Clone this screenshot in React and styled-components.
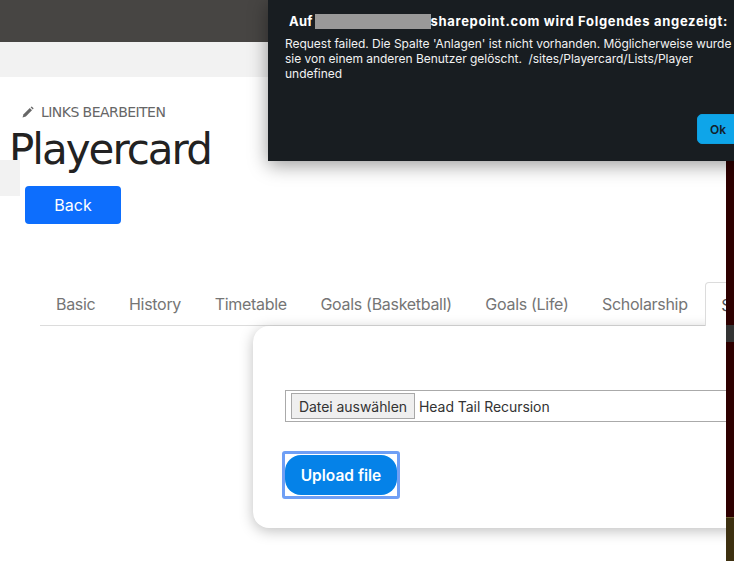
import React from "react";
import styled, { createGlobalStyle } from "styled-components";

const GlobalStyle = createGlobalStyle`
  html, body {
    margin: 0;
    padding: 0;
    background: #fff;
  }
  * {
    box-sizing: border-box;
  }
`;

const tabs = ["Basic", "History", "Timetable", "Goals (Basketball)", "Goals (Life)", "Scholarship"];

const Page = styled.div`
  position: relative;
  width: 734px;
  height: 561px;
  overflow: hidden;
  background: #fff;
  font-family: Inter, "Liberation Sans", sans-serif;
`;
const TopBar = styled.div`
  height: 42px;
  background: #474543;
`;
const SubBar = styled.div`
  height: 35px;
  background: #f2f2f2;
`;
const Main = styled.div`
  position: relative;
  padding-top: 26px;
`;
const EditLink = styled.div`
  display: flex;
  align-items: center;
  gap: 7px;
  height: 18px;
  padding-left: 22px;
  color: #666;
  font-family: "DejaVu Sans", sans-serif;
  font-size: 14px;
  letter-spacing: -0.55px;
`;
const Title = styled.h1`
  margin: 0;
  padding-left: 9px;
  height: 65px;
  color: #222;
  font-family: "DejaVu Sans", sans-serif;
  font-size: 42px;
  font-weight: 400;
  letter-spacing: -2px;
  line-height: 57px;
`;
const SideStub = styled.div`
  position: absolute;
  left: 0;
  top: 83px;
  width: 20px;
  height: 36px;
  background: #f2f2f2;
`;
const BackButton = styled.button`
  display: block;
  width: 96px;
  height: 38px;
  margin-left: 25px;
  border: 0;
  border-radius: 4px;
  background: #0d6efd;
  color: #fff;
  font: 400 16px Inter, sans-serif;
`;
const TabBar = styled.div`
  display: flex;
  height: 44px;
  margin: 58px 0 0 40px;
  border-bottom: 1px solid #dcdcdc;
`;
const Tab = styled.div`
  padding: 12px 16px 0;
  margin-right: 1.6px;
  color: #757575;
  font-size: 16px;
  letter-spacing: -0.3px;
  white-space: nowrap;
`;
const ActiveTab = styled.div`
  flex: 1;
  margin: 0 0 -1px 0;
  padding: 12px 0 0 15px;
  border: 1px solid #dcdcdc;
  border-bottom: 0;
  border-radius: 4px 0 0 0;
  background: #fff;
  color: #495057;
  font-size: 16px;
  overflow: hidden;
`;
const Card = styled.div`
  width: 500px;
  height: 202px;
  margin: 0 0 0 253px;
  padding: 64px 0 0 32px;
  border-radius: 16px;
  background: #fff;
  box-shadow: 0 3px 14px rgba(0, 0, 0, 0.25);
`;
const FileRow = styled.div`
  display: flex;
  align-items: center;
  height: 32px;
  padding-left: 5px;
  border: 1px solid #aaa;
  color: #333;
  font-size: 14px;
  letter-spacing: -0.05px;
`;
const FileButton = styled.div`
  display: flex;
  align-items: center;
  justify-content: center;
  width: 124px;
  height: 26px;
  margin-right: 4px;
  border: 1px solid #a8a8a8;
  background: #efefef;
  color: #333;
`;
const UploadRing = styled.div`
  display: inline-flex;
  margin: 29px 0 0 -3px;
  padding: 1px 0;
  border: 3px solid #6f9ff5;
  border-radius: 3px;
`;
const UploadButton = styled.button`
  width: 112px;
  height: 40px;
  border: 0;
  border-radius: 16px;
  background: #0582e8;
  color: #fff;
  font: 600 15.5px Inter, sans-serif;
`;
const Strip = styled.div`
  position: absolute;
  top: 161px;
  right: 0;
  bottom: 0;
  width: 8px;
  background: linear-gradient(
    #2e0000 0,
    #2e0000 164px,
    #333 164px,
    #333 181px,
    #2e0000 181px,
    #2e0000 356px,
    #6b5a30 356px,
    #6b5a30 357px,
    #3d3010 357px
  );
`;
const Dialog = styled.div`
  position: absolute;
  top: 0;
  left: 268px;
  width: 480px;
  height: 161px;
  padding: 13px 0 0 17px;
  background: #181d21;
  box-shadow: 0 4px 18px rgba(0, 0, 0, 0.4);
  color: #f2f2f2;
  font-family: Inter, sans-serif;
`;
const DialogTitle = styled.div`
  display: flex;
  align-items: center;
  height: 16px;
  margin: 0 0 7px 4px;
  color: #fff;
  font-size: 13px;
  font-weight: 700;
  letter-spacing: 0.68px;
  white-space: nowrap;
`;
const TitleLead = styled.span`
  letter-spacing: 0.2px;
`;
const Redacted = styled.span`
  display: inline-block;
  width: 116px;
  height: 15px;
  margin: 0 0 0 2px;
  background: #999;
`;
const DialogText = styled.div`
  width: 449px;
  font-size: 12px;
  letter-spacing: -0.03px;
  line-height: 15px;
`;
const OkButton = styled.button`
  position: absolute;
  top: 114px;
  left: 429px;
  width: 42px;
  height: 30px;
  padding-left: 12px;
  border: 1px solid #0e9fe0;
  border-radius: 5px;
  background: #0ea5e9;
  color: #12202a;
  font: 600 12px Inter, sans-serif;
  text-align: left;
`;

const PencilIcon = () => (
  <svg width="12" height="12" viewBox="0 0 12 12" aria-hidden="true">
    <path d="M0.5 11.5 L1.6 8.2 L7.8 2 L10 4.2 L3.8 10.4 Z" fill="#666" />
    <path d="M8.6 1.2 L9.7 0.4 L11.6 2.3 L10.8 3.4 Z" fill="#666" />
  </svg>
);

export default function App() {
  return (
    <Page>
      <GlobalStyle />
      <TopBar />
      <SubBar />
      <Main>
        <SideStub />
        <EditLink>
          <PencilIcon />
          LINKS BEARBEITEN
        </EditLink>
        <Title>Playercard</Title>
        <BackButton>Back</BackButton>
        <TabBar>
          {tabs.map((t) => (
            <Tab key={t}>{t}</Tab>
          ))}
          <ActiveTab>S</ActiveTab>
        </TabBar>
        <Card>
          <FileRow>
            <FileButton>Datei auswählen</FileButton>
            Head Tail Recursion
          </FileRow>
          <UploadRing>
            <UploadButton>Upload file</UploadButton>
          </UploadRing>
        </Card>
      </Main>
      <Strip />
      <Dialog>
        <DialogTitle>
          <TitleLead>Auf</TitleLead>
          <Redacted />
          sharepoint.com wird Folgendes angezeigt:
        </DialogTitle>
        <DialogText>
          Request failed. Die Spalte 'Anlagen' ist nicht vorhanden. Möglicherweise wurde sie von einem anderen Benutzer gelöscht.&nbsp; /sites/Playercard/Lists/Player undefined
        </DialogText>
        <OkButton>Ok</OkButton>
      </Dialog>
    </Page>
  );
}
